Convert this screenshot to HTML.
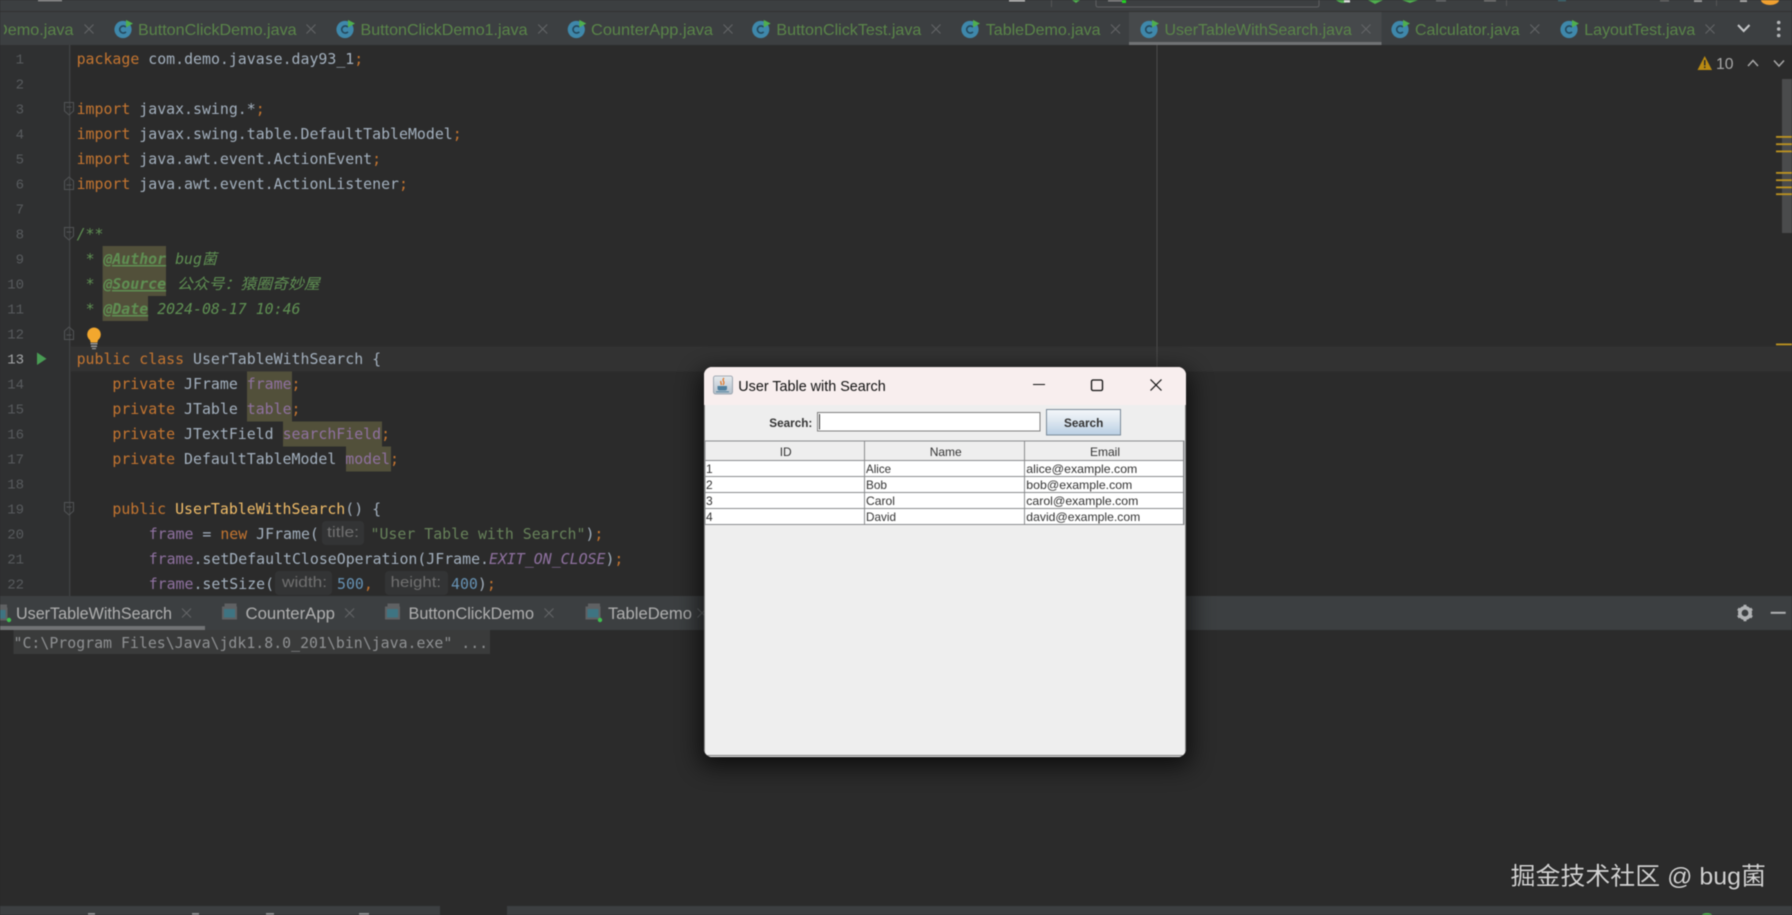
<!DOCTYPE html>
<html lang="zh">
<head>
<meta charset="utf-8">
<title>UserTableWithSearch.java</title>
<style>
html,body{margin:0;padding:0;background:#2b2b2b;width:1792px;height:915px;overflow:hidden}
svg{display:block;filter:blur(.4px)}
text{white-space:pre}
.code{font-family:"DejaVu Sans Mono","Noto Sans CJK SC",monospace;font-size:14.88px;fill:#a3b0be}
.ln{font-family:"Liberation Mono",monospace;font-size:14px;fill:#585b5e;text-anchor:end}
.k{fill:#c47530}.f{fill:#8f71a0}.s{fill:#67825a}.n{fill:#6692b4}.m{fill:#f0bc68}.c{fill:#5f9053}
.i{font-style:italic}
.tag{font-weight:bold;font-style:italic;text-decoration:underline}
.hint{font-family:"Liberation Sans",sans-serif;font-size:15px;fill:#717171}
.tab{font-family:"Liberation Sans",sans-serif;font-size:16px;fill:#5a8549}
.tool{font-family:"Liberation Sans",sans-serif;font-size:17px;fill:#b0b0b0}
.sw{font-family:"Liberation Sans",sans-serif;font-size:12px;fill:#333}
.swb{font-family:"Liberation Sans",sans-serif;font-size:12px;font-weight:bold;fill:#333}
.x{stroke:#636567;stroke-width:1.1;fill:none}
</style>
</head>
<body>
<svg width="1792" height="915" viewBox="0 0 1792 915" xmlns="http://www.w3.org/2000/svg">
<defs>
  <g id="ci">
    <circle cx="0" cy="0" r="8.6" fill="#3f88ab"/>
    <path d="M3 -2.4A3.6 3.6 0 1 0 3 2.4" fill="none" stroke="#24485c" stroke-width="1.6"/>
    <path d="M3 -9.6L10 -6L3 -2z" fill="#4fae4e"/>
  </g>
  <g id="tw">
    <rect x="-5" y="-8.5" width="12" height="3" fill="#5f6163"/>
    <rect x="-7.5" y="-5.5" width="15" height="13" fill="#5f6163"/>
    <rect x="-5.5" y="-3" width="11" height="8.5" fill="#3e7482"/>
  </g>
  <g id="cx"><path class="x" d="M-4.5 -4.5L4.5 4.5M4.5 -4.5L-4.5 4.5"/></g>
  <g id="fd"><path d="M-4.5 -5.5H4.5V3L0 7L-4.5 3z" fill="none" stroke="#525456" stroke-width="1"/><path d="M-2.5 -1H2.5" stroke="#525456"/></g>
  <g id="fu"><path d="M-4.5 5.5H4.5V-3L0 -7L-4.5 -3z" fill="none" stroke="#525456" stroke-width="1"/><path d="M-2.5 1H2.5" stroke="#525456"/></g>
  <filter id="sh" x="-20%" y="-20%" width="140%" height="140%"><feGaussianBlur stdDeviation="12"/></filter>
  <linearGradient id="btn" x1="0" y1="0" x2="0" y2="1"><stop offset="0" stop-color="#f4f7fa"/><stop offset=".45" stop-color="#dde7f0"/><stop offset="1" stop-color="#b9cfe4"/></linearGradient>
  <linearGradient id="jv" x1="0" y1="0" x2="0" y2="1"><stop offset="0" stop-color="#e6eaee"/><stop offset="1" stop-color="#b4c0cb"/></linearGradient>
  <clipPath id="tabclip"><rect x="4" y="12" width="120" height="33"/></clipPath>
  <clipPath id="winclip"><rect x="704" y="367" width="482" height="390" rx="8"/></clipPath>
</defs>

<!-- base -->
<rect width="1792" height="915" fill="#2b2b2b"/>

<!-- top toolbar fragments -->
<rect width="1792" height="12" fill="#3c3f41"/>
<rect y="11" width="1792" height="1" fill="#323232"/>
<rect x="38" y="0" width="24" height="1.2" fill="#a8a8a8"/>
<rect x="1009" y="0" width="16" height="1.5" fill="#c8c8c8"/>
<rect x="1051" y="0" width="1" height="7" fill="#555"/>
<path d="M1072 0L1076 3L1080 0z" fill="#4fae4e"/>
<path d="M1096 0V5Q1096 7 1098 7H1317Q1319 7 1319 5V0" fill="none" stroke="#5e6062"/>
<rect x="1108" y="0" width="14" height="1.5" fill="#8a8a8a"/>
<rect x="1122" y="0" width="4" height="3" fill="#22d422"/>
<path d="M1336 0Q1343 6 1350 0z" fill="#4fae4e"/><rect x="1344" y="0" width="6" height="2.500" fill="#ddd"/>
<path d="M1368 0L1375 4L1383 0z" fill="#4fae4e"/>
<path d="M1402 0L1410 3L1418 0z" fill="#4fae4e"/>
<rect x="1436" y="0" width="10" height="1.500" fill="#6a6c6e"/>
<rect x="1484" y="0" width="12" height="1.500" fill="#777"/>
<rect x="1506" y="0" width="1" height="6" fill="#555"/>
<rect x="1558" y="0" width="8" height="1.200" fill="#41737e"/>
<rect x="1660" y="0" width="9" height="1.500" fill="#666"/>
<rect x="1694" y="0" width="8" height="2" fill="#9a9a9a"/>
<rect x="1716" y="0" width="1" height="6" fill="#555"/>
<rect x="1740" y="0" width="7" height="2" fill="#a8a8a8"/>
<path d="M1761 0A9 5 0 0 0 1779 0z" fill="#f0a030"/>

<!-- editor tab bar -->
<rect y="12" width="1792" height="33" fill="#3c3f41"/>
<rect x="1129" y="12" width="252.500" height="33" fill="#46494b"/>
<rect x="1129" y="42" width="252.500" height="3" fill="#717375"/>
<g clip-path="url(#tabclip)"><text class="tab" x="-4" y="35" textLength="77.500" lengthAdjust="spacingAndGlyphs">Demo.java</text></g>
<use href="#cx" x="89" y="29"/>
<use href="#ci" x="123" y="29.500"/><text class="tab" x="138" y="35" textLength="158.600" lengthAdjust="spacingAndGlyphs">ButtonClickDemo.java</text><use href="#cx" x="311" y="29"/>
<use href="#ci" x="345" y="29.500"/><text class="tab" x="360.500" y="35" textLength="167" lengthAdjust="spacingAndGlyphs">ButtonClickDemo1.java</text><use href="#cx" x="542.700" y="29"/>
<use href="#ci" x="576.300" y="29.500"/><text class="tab" x="591" y="35" textLength="122" lengthAdjust="spacingAndGlyphs">CounterApp.java</text><use href="#cx" x="728" y="29"/>
<use href="#ci" x="760.700" y="29.500"/><text class="tab" x="776.400" y="35" textLength="145" lengthAdjust="spacingAndGlyphs">ButtonClickTest.java</text><use href="#cx" x="936" y="29"/>
<use href="#ci" x="970" y="29.500"/><text class="tab" x="985.800" y="35" textLength="114.800" lengthAdjust="spacingAndGlyphs">TableDemo.java</text><use href="#cx" x="1115.500" y="29"/>
<use href="#ci" x="1149" y="29.500"/><text class="tab" x="1164.500" y="35" textLength="187.300" lengthAdjust="spacingAndGlyphs">UserTableWithSearch.java</text><use href="#cx" x="1366" y="29"/>
<use href="#ci" x="1400" y="29.500"/><text class="tab" x="1415" y="35" textLength="104.700" lengthAdjust="spacingAndGlyphs">Calculator.java</text><use href="#cx" x="1534.800" y="29"/>
<use href="#ci" x="1569" y="29.500"/><text class="tab" x="1584.300" y="35" textLength="111" lengthAdjust="spacingAndGlyphs">LayoutTest.java</text><use href="#cx" x="1710" y="29"/>
<path d="M1738 25L1743.700 31L1749.500 25" fill="none" stroke="#c4c6c8" stroke-width="2"/>
<circle cx="1778.700" cy="22.500" r="1.800" fill="#b4b6b8"/><circle cx="1778.700" cy="29" r="1.800" fill="#b4b6b8"/><circle cx="1778.700" cy="35.500" r="1.800" fill="#b4b6b8"/>

<!-- gutter + editor -->
<rect x="0" y="45" width="70" height="551" fill="#2f3031"/>
<rect x="69.200" y="45" width="1" height="551" fill="#47494b"/>
<rect x="70" y="346.500" width="1722" height="25" fill="#323232"/>
<rect x="1156.500" y="45" width="1" height="551" fill="#4b4b4b"/>

<!-- highlights -->
<path fill="#52503a" d="M102.600 246H166V296H148V321H102.600z"/>
<rect x="247" y="371.500" width="45" height="50" fill="#52503a"/>
<rect x="283" y="421.500" width="99" height="25" fill="#52503a"/>
<rect x="346" y="446.500" width="45" height="25" fill="#52503a"/>

<!-- line numbers -->
<text class="ln" x="24" y="63.500">1</text>
<text class="ln" x="24" y="88.500">2</text>
<text class="ln" x="24" y="113.500">3</text>
<text class="ln" x="24" y="138.500">4</text>
<text class="ln" x="24" y="163.500">5</text>
<text class="ln" x="24" y="188.500">6</text>
<text class="ln" x="24" y="213.500">7</text>
<text class="ln" x="24" y="238.500">8</text>
<text class="ln" x="24" y="263.500">9</text>
<text class="ln" x="24" y="288.500">10</text>
<text class="ln" x="24" y="313.500">11</text>
<text class="ln" x="24" y="338.500">12</text>
<text class="ln" x="24" y="363.500" style="fill:#a4a6a8">13</text>
<text class="ln" x="24" y="388.500">14</text>
<text class="ln" x="24" y="413.500">15</text>
<text class="ln" x="24" y="438.500">16</text>
<text class="ln" x="24" y="463.500">17</text>
<text class="ln" x="24" y="488.500">18</text>
<text class="ln" x="24" y="513.500">19</text>
<text class="ln" x="24" y="538.500">20</text>
<text class="ln" x="24" y="563.500">21</text>
<text class="ln" x="24" y="588.500">22</text>

<!-- fold markers, run, bulb -->
<use href="#fd" x="69" y="108"/>
<use href="#fu" x="69" y="184"/>
<use href="#fd" x="69" y="233"/>
<use href="#fu" x="69" y="334"/>
<use href="#fd" x="69" y="508"/>
<path d="M37 352.500L46.500 358.800L37 365z" fill="#499c54"/>
<path d="M94 327.500a7 7 0 0 1 4 12.600l-.6 2.400h-6.800l-.6-2.400a7 7 0 0 1 4-12.600z" fill="#f2a72e"/>
<rect x="90.500" y="343" width="7" height="1.500" fill="#9a9a9a"/><rect x="91" y="345.500" width="6" height="1.500" fill="#9a9a9a"/>
<rect x="92" y="348" width="4" height="1.200" fill="#9a9a9a"/>

<!-- code -->
<text class="code" x="76.600" y="64"><tspan class="k">package</tspan> com.demo.javase.day93_1<tspan class="k">;</tspan></text>
<text class="code" x="76.600" y="114"><tspan class="k">import</tspan> javax.swing.*<tspan class="k">;</tspan></text>
<text class="code" x="76.600" y="139"><tspan class="k">import</tspan> javax.swing.table.DefaultTableModel<tspan class="k">;</tspan></text>
<text class="code" x="76.600" y="164"><tspan class="k">import</tspan> java.awt.event.ActionEvent<tspan class="k">;</tspan></text>
<text class="code" x="76.600" y="189"><tspan class="k">import</tspan> java.awt.event.ActionListener<tspan class="k">;</tspan></text>
<text class="code c i" x="76.600" y="239">/**</text>
<text class="code c" x="85.600" y="264">*</text><text class="code c tag" x="103.400" y="264">@Author</text><text class="code c i" x="175.100" y="264">bug菌</text>
<text class="code c" x="85.600" y="289">*</text><text class="code c tag" x="103.400" y="289">@Source</text><text class="code c i" x="176.800" y="289" textLength="143" lengthAdjust="spacingAndGlyphs">公众号：猿圈奇妙屋</text>
<text class="code c" x="85.600" y="314">*</text><text class="code c tag" x="103.400" y="314">@Date</text><text class="code c i" x="157.200" y="314">2024-08-17 10:46</text>
<text class="code" x="76.600" y="364"><tspan class="k">public class</tspan> UserTableWithSearch {</text>
<text class="code" x="112.400" y="389"><tspan class="k">private</tspan> JFrame <tspan class="f">frame</tspan><tspan class="k">;</tspan></text>
<text class="code" x="112.400" y="414"><tspan class="k">private</tspan> JTable <tspan class="f">table</tspan><tspan class="k">;</tspan></text>
<text class="code" x="112.400" y="439"><tspan class="k">private</tspan> JTextField <tspan class="f">searchField</tspan><tspan class="k">;</tspan></text>
<text class="code" x="112.400" y="464"><tspan class="k">private</tspan> DefaultTableModel <tspan class="f">model</tspan><tspan class="k">;</tspan></text>
<text class="code" x="112.400" y="514"><tspan class="k">public</tspan> <tspan class="m">UserTableWithSearch</tspan>() {</text>
<text class="code" x="148.700" y="539"><tspan class="f">frame</tspan> = <tspan class="k">new</tspan> JFrame(</text>
<rect x="322" y="521" width="42" height="24" rx="4" fill="#333435"/>
<text class="hint" x="327" y="537" textLength="32" lengthAdjust="spacingAndGlyphs">title:</text>
<text class="code" x="370.500" y="539"><tspan class="s">"User Table with Search"</tspan>)<tspan class="k">;</tspan></text>
<text class="code" x="148.700" y="564"><tspan class="f">frame</tspan>.setDefaultCloseOperation(JFrame.<tspan class="f i">EXIT_ON_CLOSE</tspan>)<tspan class="k">;</tspan></text>
<text class="code" x="148.700" y="589"><tspan class="f">frame</tspan>.setSize(</text>
<rect x="275" y="571" width="57" height="24" rx="4" fill="#333435"/>
<text class="hint" x="282" y="587" textLength="45" lengthAdjust="spacingAndGlyphs">width:</text>
<text class="code" x="337" y="589"><tspan class="n">500</tspan><tspan class="k">,</tspan></text>
<rect x="385" y="571" width="63" height="24" rx="4" fill="#333435"/>
<text class="hint" x="390.600" y="587" textLength="50.500" lengthAdjust="spacingAndGlyphs">height:</text>
<text class="code" x="451" y="589"><tspan class="n">400</tspan>)<tspan class="k">;</tspan></text>

<!-- inspection widget -->
<path d="M1704.700 56L1712 70H1697.500z" fill="#b98a12"/>
<rect x="1704" y="60" width="1.500" height="5.500" fill="#2b2b2b"/><rect x="1704" y="66.500" width="1.500" height="1.500" fill="#2b2b2b"/>
<text x="1716" y="69" font-family="Liberation Sans, sans-serif" font-size="16" fill="#a8a8a8" textLength="17.500" lengthAdjust="spacingAndGlyphs">10</text>
<path d="M1748 66L1753 60.500L1758 66" fill="none" stroke="#a8a8a8" stroke-width="1.500"/>
<path d="M1774 60.500L1779 66L1784 60.500" fill="none" stroke="#a8a8a8" stroke-width="1.500"/>

<!-- scrollbar + marks -->
<rect x="1782" y="79" width="10" height="154" fill="#4a4b4c"/>
<g fill="#bd9320">
<rect x="1776" y="136" width="16" height="1.800"/>
<rect x="1776" y="143.300" width="16" height="1.800"/>
<rect x="1776" y="150.500" width="16" height="1.800"/>
<rect x="1776" y="172" width="16" height="1.800"/>
<rect x="1776" y="179.300" width="16" height="1.800"/>
<rect x="1776" y="186.500" width="16" height="1.800"/>
<rect x="1776" y="193.300" width="16" height="1.800"/>
<rect x="1776" y="343.500" width="16" height="1.800"/>
</g>

<!-- run tool window tabs -->
<rect y="596" width="1792" height="34" fill="#3c3f41"/>
<rect y="626" width="205" height="4" fill="#717375"/>
<use href="#tw" x="0" y="613"/><circle cx="9" cy="620" r="2.200" fill="#3fbf4f"/>
<text class="tool" x="16" y="619" textLength="156" lengthAdjust="spacingAndGlyphs">UserTableWithSearch</text><use href="#cx" x="186.500" y="613"/>
<use href="#tw" x="229.500" y="612"/>
<text class="tool" x="245.500" y="619" textLength="89.500" lengthAdjust="spacingAndGlyphs">CounterApp</text><use href="#cx" x="349.600" y="613"/>
<use href="#tw" x="392.500" y="612"/>
<text class="tool" x="408.500" y="619" textLength="125.500" lengthAdjust="spacingAndGlyphs">ButtonClickDemo</text><use href="#cx" x="549" y="613"/>
<use href="#tw" x="593" y="612"/><circle cx="600" cy="620" r="2.200" fill="#3fbf4f"/>
<text class="tool" x="608" y="619" textLength="84" lengthAdjust="spacingAndGlyphs">TableDemo</text><use href="#cx" x="702" y="613"/>
<!-- gear + minus -->
<g transform="translate(1745 613)">
  <circle r="5.200" fill="none" stroke="#b0b2b4" stroke-width="3.600"/>
  <g stroke="#b0b2b4" stroke-width="3">
    <path d="M0 -8.200V-5.500M0 8.200V5.500M-7.100 -4.100L-4.800 -2.700M7.100 4.100L4.800 2.700M-7.100 4.100L-4.800 2.700M7.100 -4.100L4.800 -2.700"/>
  </g>
</g>
<rect x="1770.700" y="611.800" width="15" height="2" fill="#b0b2b4"/>

<!-- console -->
<rect x="0" y="630" width="1792" height="276" fill="#2b2b2b"/>
<rect x="13.500" y="630" width="476.500" height="24" fill="#3a3b3b"/>
<text class="code" x="13.500" y="648" style="fill:#8f9193">"C:\Program Files\Java\jdk1.8.0_201\bin\java.exe" ...</text>

<!-- status bar -->
<rect y="906" width="440" height="9" fill="#3c3f41"/>
<rect x="507" y="906" width="1285" height="9" fill="#3c3f41"/>
<g fill="#8a8c8e">
<rect x="88" y="913" width="7" height="2"/><rect x="192" y="913" width="7" height="2"/><rect x="266" y="913" width="8" height="2"/><rect x="359" y="913" width="10" height="2"/>
</g>
<path d="M1702 915a5 2 0 0 1 10 0z" fill="#4fae4e"/>

<!-- watermark -->
<text x="1510.500" y="884.500" font-family="Liberation Sans, Noto Sans CJK SC, sans-serif" font-size="24.500" fill="#d2d2d2" textLength="255.500" lengthAdjust="spacingAndGlyphs" style="paint-order:stroke" stroke="#1c1c1c" stroke-width="1">掘金技术社区 @ bug菌</text>

<!-- Swing window -->
<rect x="700" y="372" width="490" height="394" rx="8" fill="#000" opacity=".7" filter="url(#sh)"/>
<g clip-path="url(#winclip)">
  <rect x="704" y="367" width="482" height="390" fill="#eeeeee"/>
  <rect x="704" y="367" width="482" height="38" fill="#f8eeee"/>
  <rect x="704" y="755" width="482" height="1" fill="#7d7d7d"/>
  <rect x="704" y="756" width="482" height="1" fill="#f2f2f2"/>
  <rect x="704" y="405" width="1" height="350" fill="#8a8a8a"/>
  <rect x="1185" y="405" width="1" height="350" fill="#8a8a8a"/>
</g>
<!-- java icon -->
<rect x="713.500" y="376" width="19" height="18" rx="2" fill="url(#jv)" stroke="#8c98a4" stroke-width=".800"/>
<path d="M724 378c-3 3 2 3-1 7M721 381c-1 2 1 2 0 4" fill="none" stroke="#e0782a" stroke-width="1.300"/>
<path d="M717.500 386h9.500v2.500q0 2-2 2h-5.500q-2 0-2-2z" fill="#4f7f9e"/>
<path d="M716 391.800h13" stroke="#4f7f9e"/>
<text x="738.300" y="391" font-family="Liberation Sans, sans-serif" font-size="15" fill="#111" textLength="147.400" lengthAdjust="spacingAndGlyphs">User Table with Search</text>
<rect x="1033" y="384" width="12" height="1" fill="#111"/>
<rect x="1091.500" y="380" width="11" height="10.500" rx="1.500" fill="none" stroke="#111" stroke-width="1.300"/>
<path d="M1150.500 379.500L1161.500 390.500M1161.500 379.500L1150.500 390.500" stroke="#111" stroke-width="1.200" fill="none"/>

<!-- search row -->
<text class="swb" x="769.300" y="427" textLength="43" lengthAdjust="spacingAndGlyphs">Search:</text>
<rect x="817.500" y="412.500" width="222.500" height="18.500" fill="#fff" stroke="#7f7f7f"/>
<rect x="819" y="414" width="1" height="15.500" fill="#333"/>
<rect x="1046.500" y="409.500" width="74" height="25.500" fill="url(#btn)" stroke="#7a8a99"/>
<text class="swb" x="1064" y="427" textLength="39.300" lengthAdjust="spacingAndGlyphs">Search</text>

<!-- table -->
<rect x="705" y="441" width="479" height="84" fill="#fff"/>
<rect x="705" y="441" width="479" height="19.500" fill="#eeeeee"/>
<g fill="none" stroke="#8a8c8e" stroke-width="1">
  <rect x="705" y="441" width="479" height="83.500"/>
  <path d="M705 460.500H1184M705 476.500H1184M705 492.500H1184M705 508.500H1184"/>
  <path d="M864.500 441V524.500M1024.500 441V524.500M1183.500 441V524.500"/>
</g>
<text class="sw" x="785.700" y="456" text-anchor="middle">ID</text>
<text class="sw" x="945.700" y="456" text-anchor="middle">Name</text>
<text class="sw" x="1105" y="456" text-anchor="middle">Email</text>
<text class="sw" x="706" y="473">1</text><text class="sw" x="866" y="473" textLength="25" lengthAdjust="spacingAndGlyphs">Alice</text><text class="sw" x="1026.300" y="473" textLength="111" lengthAdjust="spacingAndGlyphs">alice@example.com</text>
<text class="sw" x="706" y="489">2</text><text class="sw" x="866" y="489" textLength="21" lengthAdjust="spacingAndGlyphs">Bob</text><text class="sw" x="1026.300" y="489" textLength="106" lengthAdjust="spacingAndGlyphs">bob@example.com</text>
<text class="sw" x="706" y="505">3</text><text class="sw" x="866" y="505" textLength="29" lengthAdjust="spacingAndGlyphs">Carol</text><text class="sw" x="1026.300" y="505" textLength="112" lengthAdjust="spacingAndGlyphs">carol@example.com</text>
<text class="sw" x="706" y="521">4</text><text class="sw" x="866" y="521" textLength="30" lengthAdjust="spacingAndGlyphs">David</text><text class="sw" x="1026.300" y="521" textLength="114" lengthAdjust="spacingAndGlyphs">david@example.com</text>
</svg>
</body>
</html>
